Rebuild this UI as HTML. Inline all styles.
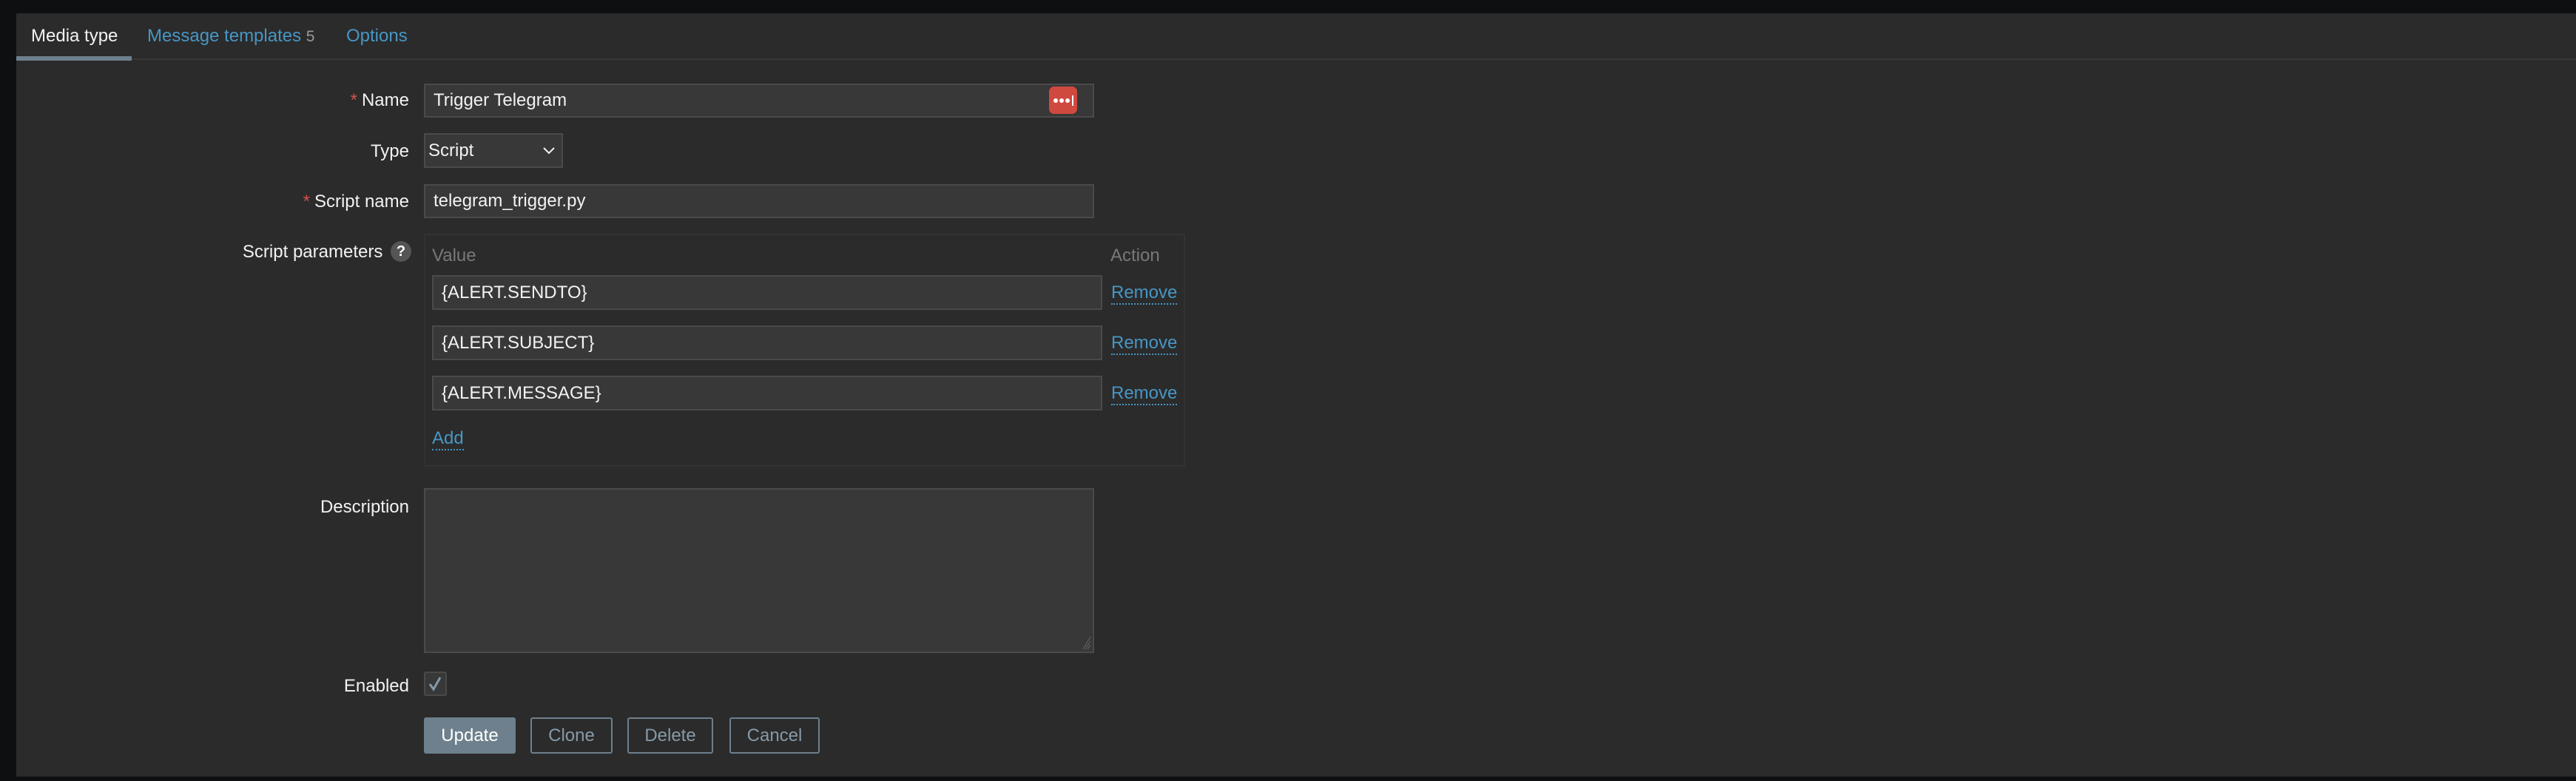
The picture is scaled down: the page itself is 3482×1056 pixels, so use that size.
<!DOCTYPE html>
<html><head><meta charset="utf-8"><style>
*{box-sizing:border-box;margin:0;padding:0}
body{width:3482px;height:1056px;background:#0e0f11;font-family:"Liberation Sans",Arial,sans-serif;font-size:24px;color:#f2f2f2;position:relative;overflow:hidden}
.panel{position:absolute;left:22px;top:18px;width:3460px;height:1032px;background:#2b2b2b}
.a{position:absolute}
.lbl{position:absolute;right:2929px;text-align:right;white-space:nowrap}
.req{color:#d64e4e;margin-right:6px}
.inp{position:absolute;background:#383838;border:2px solid #4a4a4a;padding-left:11px;display:flex;align-items:center;white-space:nowrap}
.link{color:#4796c4;border-bottom:2px dotted #4796c4;padding-bottom:1px;line-height:1}
.btn{position:absolute;top:970px;height:49px;border:2px solid #6e808d;border-radius:3px;color:#879aa8;display:flex;align-items:center;justify-content:center;font-size:24px}
</style></head><body>
<div class="panel"></div>
<div class="a" style="left:42px;top:35px;color:#f2f2f2">Media type</div>
<div class="a" style="left:199px;top:35px;color:#4796c4">Message templates <span style="color:#9a9a9a;font-size:21px">5</span></div>
<div class="a" style="left:468px;top:35px;color:#4796c4">Options</div>
<div class="a" style="left:22px;top:79px;width:3460px;height:2px;background:#383838"></div>
<div class="a" style="left:22px;top:76px;width:156px;height:6px;background:#6e808d"></div>

<div class="lbl" style="top:122px"><span class="req">*</span>Name</div>
<div class="inp" style="left:573px;top:113px;width:906px;height:46px">Trigger Telegram</div>
<div class="a" style="left:1418px;top:117px;width:38px;height:37px;background:#d0493f;border-radius:7px"><svg width="38" height="37"><circle cx="9" cy="19" r="3" fill="#fff"/><circle cx="17" cy="19" r="3" fill="#fff"/><circle cx="25" cy="19" r="3" fill="#fff"/><rect x="31" y="12" width="2" height="14" fill="#fff"/></svg></div>

<div class="lbl" style="top:191px">Type</div>
<div class="inp" style="left:573px;top:180px;width:188px;height:47px;padding-left:4px">Script<svg class="a" style="right:8px;top:15px" width="18" height="14"><path d="M2 3 L9 10 L16 3" stroke="#f2f2f2" stroke-width="2" fill="none"/></svg></div>

<div class="lbl" style="top:259px"><span class="req">*</span>Script name</div>
<div class="inp" style="left:573px;top:249px;width:906px;height:46px">telegram_trigger.py</div>

<div class="lbl" style="top:326px;right:2926px">Script parameters <span style="display:inline-block;width:28px;height:28px;border-radius:50%;background:#555;color:#fff;font-weight:bold;font-size:20px;text-align:center;line-height:28px;vertical-align:2px;margin-left:4px">?</span></div>
<div class="a" style="left:573px;top:316px;width:1029px;height:315px;border:2px solid #333"></div>
<div class="a" style="left:584px;top:332px;color:#787878">Value</div>
<div class="a" style="left:1501px;top:332px;color:#787878">Action</div>
<div class="inp" style="left:584px;top:372px;width:906px;height:47px">{ALERT.SENDTO}</div>
<div class="inp" style="left:584px;top:440px;width:906px;height:47px">{ALERT.SUBJECT}</div>
<div class="inp" style="left:584px;top:508px;width:906px;height:47px">{ALERT.MESSAGE}</div>
<div class="a" style="left:1502px;top:382px"><span class="link">Remove</span></div>
<div class="a" style="left:1502px;top:450px"><span class="link">Remove</span></div>
<div class="a" style="left:1502px;top:518px"><span class="link">Remove</span></div>
<div class="a" style="left:584px;top:579px"><span class="link">Add</span></div>

<div class="lbl" style="top:672px">Description</div>
<div class="inp" style="left:573px;top:660px;width:906px;height:223px"><svg class="a" style="right:2px;bottom:2px" width="12" height="20"><path d="M11 2 L1 19 M11 8 L4 19 M11 13 L7 19" stroke="#666" stroke-width="1"/></svg></div>

<div class="lbl" style="top:914px">Enabled</div>
<div class="a" style="left:573px;top:908px;width:31px;height:33px;background:#383838;border:2px solid #4a4a4a;border-radius:3px"><svg width="27" height="29"><path d="M6 15 L11 22 L20 6" stroke="#8598a6" stroke-width="3" fill="none"/></svg></div>

<div class="btn" style="left:573px;width:124px;background:#6e808d;color:#fff;border-color:#6e808d">Update</div>
<div class="btn" style="left:717px;width:111px">Clone</div>
<div class="btn" style="left:848px;width:116px">Delete</div>
<div class="btn" style="left:986px;width:122px">Cancel</div>
</body></html>
